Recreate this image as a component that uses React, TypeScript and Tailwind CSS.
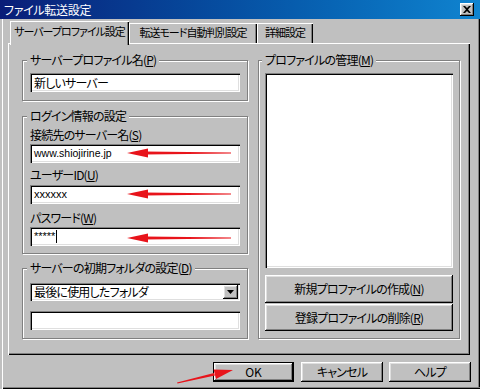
import type { ReactNode } from 'react'

const raised =
  'bg-[#c0c0c0] shadow-[inset_-1px_-1px_0_#000,inset_1px_1px_0_#fff,inset_-2px_-2px_0_#808080,inset_2px_2px_0_#dfdfdf]'
const sunken =
  'bg-white shadow-[inset_1px_1px_0_#808080,inset_2px_2px_0_#000,inset_-1px_-1px_0_#fff,inset_-2px_-2px_0_#dfdfdf]'
const tab = 'shadow-[inset_1px_1px_0_#fff,inset_-1px_0_0_#000,inset_-2px_0_0_#808080]'

function Key({ k }: { k: string }) {
  return (
    <>
      (<span className="underline">{k}</span>)
    </>
  )
}

function Group({ label, className, children }: { label: ReactNode; className?: string; children: ReactNode }) {
  return (
    <div
      className={`flex flex-col border border-[#808080] shadow-[inset_1px_1px_0_#fff,1px_1px_0_#fff] ${className ?? ''}`}
    >
      <div className="-mt-[9px] h-[16px] leading-[16px] whitespace-nowrap">
        <span className="-ml-[3px] bg-[#c0c0c0] px-[3px]">{label}</span>
      </div>
      {children}
    </div>
  )
}

function Field({ value, className }: { value: ReactNode; className?: string }) {
  return (
    <div className={`${sunken} flex h-[19px] items-center pl-[4px] leading-none ${className ?? ''}`}>{value}</div>
  )
}

export default function App() {
  return (
    <div className="relative flex h-[389px] w-[480px] flex-col overflow-hidden bg-[#c0c0c0] font-['Noto_Sans_CJK_JP','Noto_Sans',sans-serif] text-[12px] tracking-[-0.8px] text-black [font-feature-settings:'palt'] shadow-[inset_2px_0_0_#c0c0c0,inset_3px_0_0_#fff,inset_0_-1px_0_#000,inset_0_-2px_0_#808080,inset_-1px_0_0_#000,inset_-2px_0_0_#808080]">
      {/* title bar */}
      <div className="flex h-[19px] shrink-0 items-center justify-between bg-gradient-to-r from-[#0a1d78] to-[#1084d0] pl-[4px] pr-[6px]">
        <span className="leading-none tracking-[-0.3px] text-white">ファイル転送設定</span>
        <div className={`${raised} flex h-[13px] w-[14px] items-center justify-center`}>
          <svg width="8" height="7" viewBox="0 0 8 7">
            <path d="M0 0h2l2 2 2-2h2L5 3.5 8 7H6L4 5 2 7H0l3-3.5z" fill="#000" />
          </svg>
        </div>
      </div>

      {/* tabs */}
      <div className="mt-[2px] ml-[10px] flex h-[22px] shrink-0 items-start text-[11px] leading-none tracking-[-1px] whitespace-nowrap">
        <div className={`${tab} relative z-10 flex h-[24px] w-[119px] justify-center bg-[#c0c0c0] pt-[5px]`}>
          サーバープロファイル設定
        </div>
        <div className={`${tab} mt-[2px] flex h-[20px] w-[128px] justify-center pt-[4px]`}>
          転送モード自動判別設定
        </div>
        <div className={`${tab} mt-[2px] flex h-[20px] w-[56px] justify-center pt-[4px]`}>詳細設定</div>
      </div>

      {/* tab panel */}
      <div className="ml-[8px] flex h-[312px] w-[462px] shrink-0 gap-[10px] pt-[17px] pr-[10px] pl-[14px] shadow-[inset_1px_1px_0_#fff,inset_-1px_-1px_0_#000,inset_-2px_-2px_0_#808080]">
        <div className="flex w-[226px] flex-col">
          <Group label={<>サーバープロファイル名<Key k="P" /></>} className="px-[7px] pb-[8px]">
            <Field value="新しいサーバー" className="mt-[5px]" />
          </Group>

          <Group label="ログイン情報の設定" className="mt-[15px] px-[7px] pb-[7px]">
            <div className="mt-[3px] h-[16px] leading-[16px]">
              接続先のサーバー名<Key k="S" />
            </div>
            <Field
              value={<span className="font-['Liberation_Sans',sans-serif] text-[10.5px] tracking-normal">www.shiojirine.jp</span>}
              className="mt-[1px]"
            />
            <div className="mt-[4px] h-[16px] leading-[16px]">
              ユーザーID<Key k="U" />
            </div>
            <Field
              value={<span className="font-['Liberation_Sans',sans-serif] text-[11px] tracking-normal">xxxxxx</span>}
              className="mt-[2px]"
            />
            <div className="mt-[6px] h-[16px] leading-[16px]">
              パスワード<Key k="W" />
            </div>
            <Field
              value={
                <span className="flex items-center font-['Liberation_Sans',sans-serif] text-[11px] tracking-normal">
                  *****<span className="ml-px h-[13px] w-px bg-black" />
                </span>
              }
              className="mt-[1px]"
            />
          </Group>

          <Group label={<>サーバーの初期フォルダの設定<Key k="D" /></>} className="mt-[14px] px-[7px] pb-[8px]">
            <div className={`${sunken} mt-[7px] flex h-[18px] items-center justify-between pr-[2px] pl-[4px] leading-none`}>
              <span>最後に使用したフォルダ</span>
              <div className={`${raised} flex h-[14px] w-[15px] items-center justify-center`}>
                <svg width="7" height="4" viewBox="0 0 7 4">
                  <path d="M0 0h7L3.5 4z" fill="#000" />
                </svg>
              </div>
            </div>
            <Field value="" className="mt-[10px]" />
          </Group>
        </div>

        <Group label={<>プロファイルの管理<Key k="M" /></>} className="mb-[16px] w-[202px] px-[6px]">
          <div className={`${sunken} mt-[5px] h-[195px]`} />
          <div className={`${raised} mt-[7px] flex h-[28px] items-center justify-center`}>
            新規プロファイルの作成<Key k="N" />
          </div>
          <div className={`${raised} mt-[1px] flex h-[27px] items-center justify-center`}>
            登録プロファイルの削除<Key k="R" />
          </div>
        </Group>
      </div>

      {/* dialog buttons */}
      <div className="mt-[7px] flex justify-end gap-[6px] pr-[9px]">
        <div className={`${raised} mr-px flex h-[20px] w-[81px] items-center justify-center border border-black tracking-normal`}>
          OK
        </div>
        <div className={`${raised} flex h-[20px] w-[82px] items-center justify-center`}>キャンセル</div>
        <div className={`${raised} flex h-[20px] w-[82px] items-center justify-center`}>ヘルプ</div>
      </div>

      {/* red annotation arrows */}
      <svg className="pointer-events-none absolute inset-0" width="480" height="389" viewBox="0 0 480 389">
        {[153, 194, 238].map((y) => (
          <g key={y}>
            <path d={`M145 ${y - 1.5}L231 ${y - 0.5}V${y + 0.5}L145 ${y + 1.5}z`} fill="#e8141b" />
            <path d={`M127 ${y}L148 ${y - 4.5}V${y + 4.5}z`} fill="#e8141b" />
          </g>
        ))}
        <path d="M177 382.5L214 373L215 375.5L177.5 383.5z" fill="#e8141b" />
        <path d="M233 370L213.6 369.5L216 379z" fill="#e8141b" />
      </svg>
    </div>
  )
}
